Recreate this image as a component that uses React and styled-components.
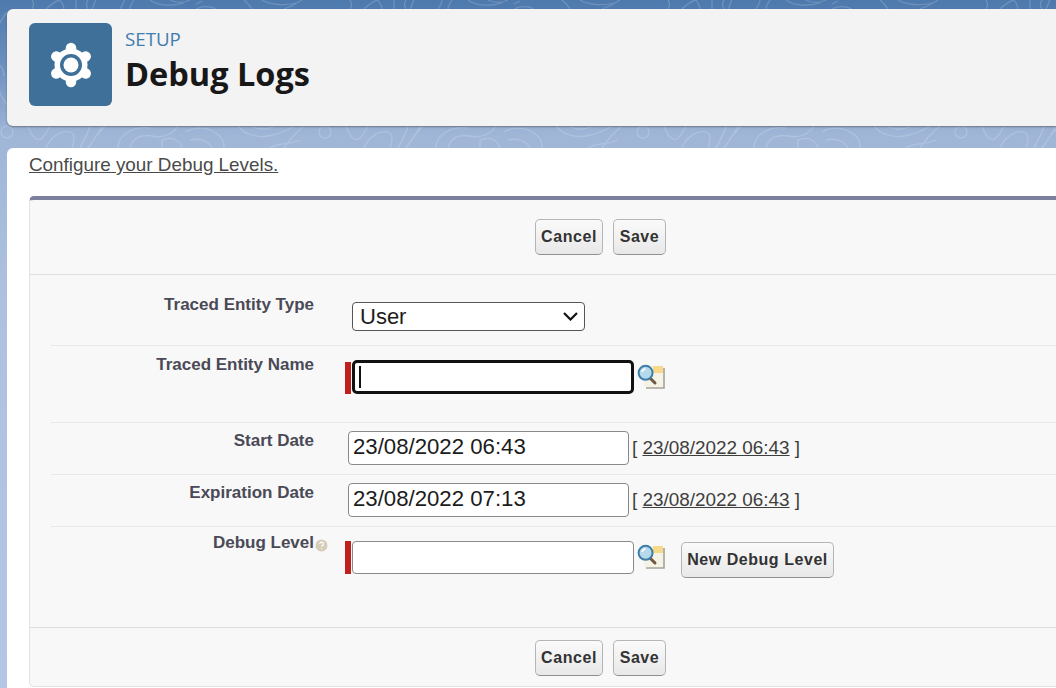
import React from "react";
import styled, { createGlobalStyle } from "styled-components";

const GlobalStyle = createGlobalStyle`
  html, body { margin: 0; padding: 0; }
  body {
    width: 1056px;
    height: 688px;
    overflow: hidden;
    font-family: "Liberation Sans", Arial, sans-serif;
  }
`;

const Page = styled.div`
  position: relative;
  width: 1056px;
  height: 688px;
  overflow: hidden;
  padding: 9px 0 0 7px;
  box-sizing: border-box;
  background: linear-gradient(180deg, #4d79ad 0, #6c90bf 65px, #a0b6d7 135px, #aec1df 300px, #b4c6e4 100%);
`;

const Contours = styled.svg`
  position: absolute;
  left: 0;
  top: 0;
`;

const Header = styled.header`
  position: relative;
  display: flex;
  align-items: center;
  gap: 13px;
  height: 117px;
  margin-right: -12px;
  padding: 0 0 6px 22px;
  box-sizing: border-box;
  background: #f3f3f3;
  border-radius: 6px 0 0 6px;
  box-shadow: 0 1px 2px rgba(70, 70, 70, 0.55);
`;

const IconTile = styled.div`
  display: flex;
  align-items: center;
  justify-content: center;
  width: 83px;
  height: 83px;
  background: #3f7099;
  border-radius: 6px;
`;

const Titles = styled.div`
  display: flex;
  flex-direction: column;
  margin-top: -8px;
`;

const Eyebrow = styled.div`
  font-family: "Open Sans", sans-serif;
  font-size: 18.7px;
  line-height: 25px;
  color: #3f7cb0;
`;

const Title = styled.h1`
  margin: 0;
  font-family: "Open Sans", sans-serif;
  font-size: 32.5px;
  line-height: 45px;
  font-weight: 700;
  color: #181818;
`;

const Body = styled.main`
  position: relative;
  height: 540px;
  margin-top: 22px;
  margin-right: -12px;
  padding: 5px 0 0 22px;
  box-sizing: border-box;
  background: #fff;
  border-radius: 6px 0 0 0;
`;

const Intro = styled.a`
  display: block;
  font-size: 18.85px;
  line-height: 24px;
  color: #4a4a4a;
  text-decoration: underline;
`;

const Block = styled.section`
  margin-top: 19px;
  height: 491px;
  box-sizing: border-box;
  background: #f8f8f8;
  border: 1px solid #e2e2e2;
  border-top: 4px solid #7c809e;
  border-right: none;
  border-radius: 5px 0 0 5px;
`;

const ButtonBar = styled.div`
  display: flex;
  justify-content: center;
  gap: 10px;
  width: 1141px;
  box-sizing: border-box;
  height: ${(p) => p.$height}px;
  padding-top: ${(p) => p.$top}px;
  border-bottom: ${(p) => (p.$line ? "1px solid #dedede" : "none")};
`;

const Button = styled.button`
  width: ${(p) => p.$width}px;
  height: 36px;
  padding: 0;
  font-family: "Liberation Sans", Arial, sans-serif;
  font-size: 16px;
  font-weight: 700;
  letter-spacing: 0.55px;
  color: #333;
  background: linear-gradient(180deg, #fafafa, #e8e8e9);
  border: 1px solid #b5b5b5;
  border-bottom-color: #8f8f8f;
  border-radius: 5px;
`;

const Rows = styled.div`
  height: 352px;
  border-bottom: 1px solid #dedede;
`;

const Row = styled.div`
  display: flex;
  height: ${(p) => p.$height}px;
  margin-left: 21px;
  box-sizing: border-box;
  border-bottom: ${(p) => (p.$line ? "1px solid #e8e8e8" : "none")};
`;

const Label = styled.label`
  flex: none;
  width: 263px;
  display: flex;
  justify-content: flex-end;
  padding-top: ${(p) => p.$top}px;
  box-sizing: border-box;
  font-size: 17px;
  line-height: 19px;
  font-weight: 700;
  color: #4a4a56;
`;

const Field = styled.div`
  display: flex;
  align-items: flex-start;
  flex: 1;
  padding-top: ${(p) => p.$top}px;
  padding-left: ${(p) => p.$left}px;
`;

const RequiredBar = styled.span`
  flex: none;
  width: 6px;
  height: ${(p) => p.$height}px;
  margin-top: ${(p) => p.$offset || 0}px;
  margin-right: 1px;
  background: #c0201c;
`;

const InputWrap = styled.div`
  position: relative;
  flex: none;
`;

const Input = styled.input`
  display: block;
  box-sizing: border-box;
  width: ${(p) => p.$width}px;
  height: ${(p) => p.$height}px;
  padding: 0 4px 3px;
  font-family: "Liberation Sans", Arial, sans-serif;
  font-size: 22.2px;
  color: #1c1c1c;
  background: #fff;
  border: ${(p) => (p.$focused ? "3px solid #111" : "1px solid #8a8a8a")};
  border-radius: ${(p) => (p.$focused ? 5 : 4)}px;
  outline: none;
`;

const Caret = styled.span`
  position: absolute;
  left: 7px;
  top: 6px;
  width: 2px;
  height: 22px;
  background: #111;
`;

const Select = styled.select`
  display: block;
  width: 233px;
  height: 29px;
  box-sizing: border-box;
  padding-left: 7px;
  appearance: none;
  font-family: "Liberation Sans", Arial, sans-serif;
  font-size: 22px;
  color: #1c1c1c;
  background: #fff;
  border: 1px solid #555;
  border-radius: 4px;
`;

const Chevron = styled.svg`
  position: absolute;
  right: 7px;
  top: 10px;
  pointer-events: none;
`;

const Lookup = styled.svg`
  flex: none;
  margin-left: 3px;
  margin-top: ${(p) => p.$top || 0}px;
`;

const DateHint = styled.span`
  margin-left: 3px;
  margin-top: ${(p) => p.$top}px;
  font-size: 18.9px;
  line-height: 22px;
  color: #3e3e3c;
  white-space: nowrap;

  a {
    color: #3e3e3c;
    text-decoration: underline;
  }
`;

const NewLevel = styled(Button)`
  margin-left: 16px;
  margin-top: 1px;
`;

const Help = styled.svg`
  flex: none;
  margin: 6px -14px 0 1px;
`;

const GearIcon = () => (
  <svg width="46" height="46" viewBox="-23 -23 46 46">
    <circle r="16.5" fill="#fff" />
    {[90, 30, -30, -90, -150, 150].map((deg) => (
      <line
        key={deg}
        x2={Math.cos((deg * Math.PI) / 180) * 17}
        y2={Math.sin((deg * Math.PI) / 180) * 17}
        stroke="#fff"
        strokeWidth="10.5"
        strokeLinecap="round"
      />
    ))}
    <circle r="11" fill="#3f7099" />
    <circle r="7.5" fill="#fff" />
  </svg>
);

const LookupIcon = ({ top }) => (
  <Lookup $top={top} width="28" height="25" viewBox="0 0 28 25">
    <path d="M7 2h19v21H7z" fill="#f6f3e6" />
    <path d="M16 2h10v7H16z" fill="#f8d98a" />
    <path d="M27 4v20H9" fill="none" stroke="#a3a396" strokeWidth="1.6" />
    <path d="M12 13l6 6" stroke="#6f5844" strokeWidth="3" strokeLinecap="round" />
    <circle cx="8.6" cy="8.8" r="7" fill="#b5d9ec" stroke="#3f7da6" strokeWidth="2" />
    <path d="M5 8a4 4 0 0 1 3.5-3" fill="none" stroke="#fff" strokeWidth="1.5" />
  </Lookup>
);

const Background = () => (
  <Contours width="1056" height="688" viewBox="0 0 1056 688">
    <defs>
      <pattern id="contours" width="318" height="160" patternUnits="userSpaceOnUse">
        <g fill="none" stroke="rgba(255,255,255,0.17)" strokeWidth="1.3">
          <circle cx="7" cy="132" r="6" />
          <path d="M-10 148c4-8 6-16 0-22M28 126c4 12 10 16 14 12s6-8 8-12" />
          <path d="M46 148c4-10 14-18 24-16 6 2 4 10 2 16" />
          <path d="M80 148c4-8 8-14 10-22M88 148c6-8 10-14 14-22M97 135l8-9" />
          <path d="M118 148c0-14 16-22 32-20M130 148c2-8 8-14 22-12 8 2 20 0 26-10" />
          <path d="M162 148v-8c10-4 18 0 20 8M186 132c6-4 18-6 28 0s10 10 10 16M190 140c8-2 18 0 22 8" />
          <path d="M238 126c6 8 18 12 30 10s20-6 26-10M252 126c6 4 16 4 22 0M284 148c4-6 10-14 20-22M270 148c10-6 16-2 30-8" />
          <path d="M32 0c2 3 2 6 0 9M46 9c4-4 10-8 14-9M60 0c2 3 4 6 4 9M76 0v9M88 0c-2 3-2 6 0 9M96 0c-2 3-2 6-4 9" />
          <path d="M124 0c0 3-2 6-4 9M134 0c-2 3-4 6-4 9M150 0c6 5 20 7 34 3M170 0c6 3 14 3 20 0M196 4l6-3M196 9c6-3 14-3 20 0" />
          <path d="M244 0c4 3 6 6 8 9M262 0c8 5 24 6 34 3M284 9c6-2 12-5 18-9" />
          <path d="M-6 60c6 4 10 10 10 16M0 92c2 6 4 10 7 12M-4 30c4-8 8-14 11-18" />
        </g>
      </pattern>
    </defs>
    <rect width="1056" height="150" fill="url(#contours)" />
  </Contours>
);

const FormButtons = ({ height, top, line }) => (
  <ButtonBar $height={height} $top={top} $line={line}>
    <Button $width={68}>Cancel</Button>
    <Button $width={53}>Save</Button>
  </ButtonBar>
);

const App = () => (
  <Page>
    <GlobalStyle />
    <Background />
    <Header>
      <IconTile>
        <GearIcon />
      </IconTile>
      <Titles>
        <Eyebrow>SETUP</Eyebrow>
        <Title>Debug Logs</Title>
      </Titles>
    </Header>
    <Body>
      <Intro>Configure your Debug Levels.</Intro>
      <Block>
        <FormButtons height={75} top={19} line />
        <Rows>
          <Row $height={71} $line>
            <Label $top={20}>Traced Entity Type</Label>
            <Field $top={27} $left={38}>
              <InputWrap>
                <Select defaultValue="User">
                  <option>User</option>
                </Select>
                <Chevron width="15" height="9" viewBox="0 0 15 9">
                  <path d="M1 1l6.5 6.5L14 1" fill="none" stroke="#111" strokeWidth="2.2" />
                </Chevron>
              </InputWrap>
            </Field>
          </Row>
          <Row $height={77} $line>
            <Label $top={9}>Traced Entity Name</Label>
            <Field $top={14} $left={31}>
              <RequiredBar $height={32} $offset={2} />
              <InputWrap>
                <Input $width={282} $height={34} $focused readOnly />
                <Caret />
              </InputWrap>
              <LookupIcon top={4} />
            </Field>
          </Row>
          <Row $height={52} $line>
            <Label $top={8}>Start Date</Label>
            <Field $top={8} $left={34}>
              <Input $width={281} $height={34} defaultValue="23/08/2022 06:43" />
              <DateHint $top={6}>
                [ <a>23/08/2022 06:43</a> ]
              </DateHint>
            </Field>
          </Row>
          <Row $height={52} $line>
            <Label $top={8}>Expiration Date</Label>
            <Field $top={8} $left={34}>
              <Input $width={281} $height={34} defaultValue="23/08/2022 07:13" />
              <DateHint $top={6}>
                [ <a>23/08/2022 06:43</a> ]
              </DateHint>
            </Field>
          </Row>
          <Row $height={100}>
            <Label $top={6}>
              Debug Level
              <Help width="13" height="13" viewBox="0 0 13 13">
                <circle cx="6.5" cy="6.5" r="6" fill="#d5cdb8" />
                <path d="M4.8 5a1.8 1.8 0 1 1 2.4 1.7c-.5.2-.7.5-.7 1M6.5 9.2v1" fill="none" stroke="#fff" strokeWidth="1.2" />
              </Help>
            </Label>
            <Field $top={14} $left={31}>
              <RequiredBar $height={33} />
              <InputWrap>
                <Input $width={282} $height={33} readOnly />
              </InputWrap>
              <LookupIcon top={3} />
              <NewLevel $width={153}>New Debug Level</NewLevel>
            </Field>
          </Row>
        </Rows>
        <FormButtons height={58} top={12} />
      </Block>
    </Body>
  </Page>
);

export default App;
